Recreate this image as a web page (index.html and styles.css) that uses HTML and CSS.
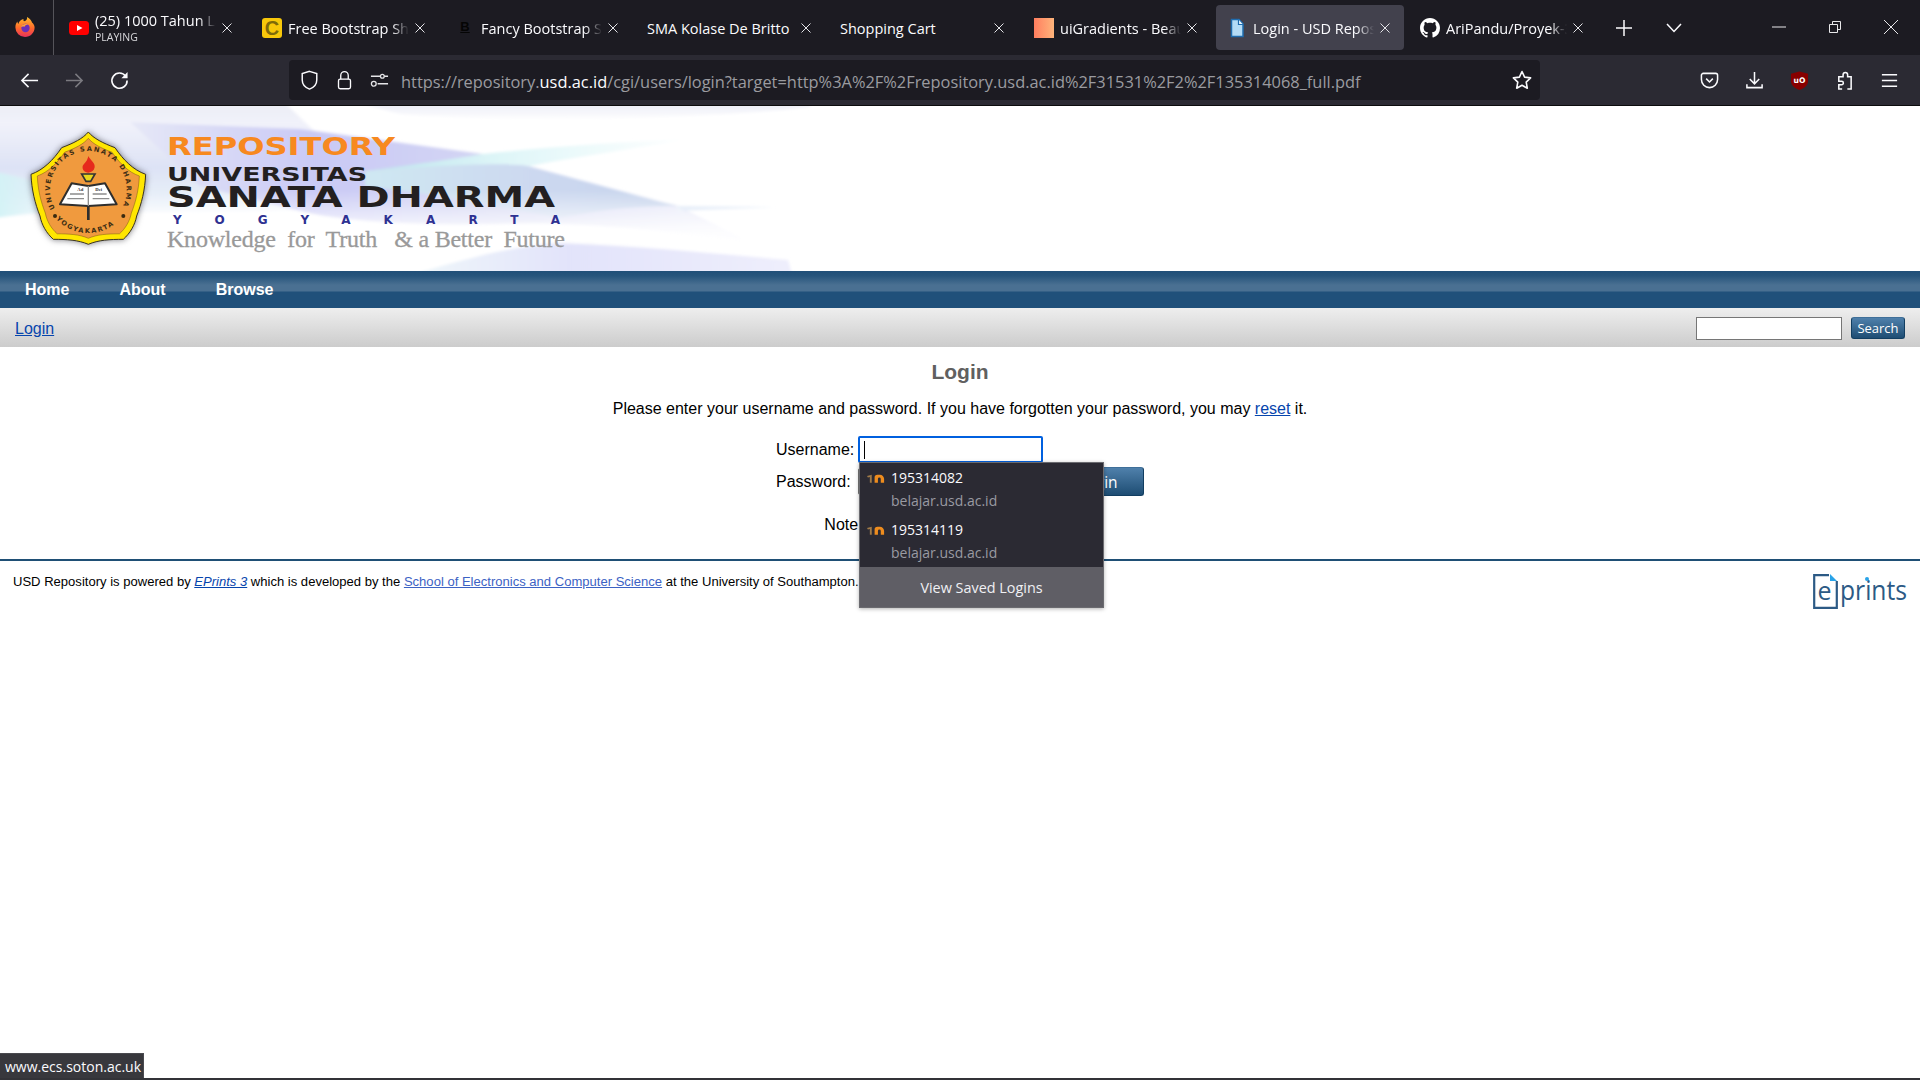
FILE: index.html
```html
<!DOCTYPE html>
<html lang="en">
<head>
<meta charset="utf-8">
<title>Login - USD Repository</title>
<link rel="stylesheet" href="styles.css">
</head>
<body>
<div class="tabstrip">
  <div class="ff-box">
    <svg class="ff" viewBox="0 0 20 20"><defs><linearGradient id="ffg" x1="0" y1="0" x2="0" y2="1"><stop offset="0" stop-color="#ffbd2e"/><stop offset=".55" stop-color="#ff6a2b"/><stop offset="1" stop-color="#e8305c"/></linearGradient></defs><path d="M10 20a9.600 9.600 0 0 1-9.600-9.600c0-2.400.8-4.400 2-5.800 0 1 .3 1.800.9 2.300C4 4 6.500 2.400 8.600 2c-.4 1-.2 1.800.4 2.200C11.500 3.800 12.400 2 12 0c3 1.500 4.700 4 5 5.500 1.500 1 2.600 3 2.600 5 0 5.300-4.300 9.500-9.600 9.500z" fill="url(#ffg)"/><circle cx="10.500" cy="11" r="4.200" fill="#6b2fb8"/><path d="M6 10c1-3 5-4 8-2-3-.5-4 .5-4 1.500-1 0-3 0-4 .5z" fill="#ffa436"/></svg>
  </div>
  <div class="tabs">
    <div class="tab">
      <svg class="fav" viewBox="0 0 20 20"><rect y="3" width="20" height="14" rx="3.500" fill="#f00"/><path d="M8 7l5.500 3L8 13z" fill="#fff"/></svg>
      <div class="title two-line"><span class="title-main">(25) 1000 Tahun Lamanya</span><span class="title-sub">PLAYING</span></div>
      <svg class="close" viewBox="0 0 10 10"><path d="M.5.5l9 9M9.500.5l-9 9"/></svg>
    </div>
    <div class="tab">
      <span class="fav fav-c">C</span>
      <div class="title">Free Bootstrap Shop Cart</div>
      <svg class="close" viewBox="0 0 10 10"><path d="M.5.5l9 9M9.500.5l-9 9"/></svg>
    </div>
    <div class="tab">
      <span class="fav fav-b">B</span>
      <div class="title">Fancy Bootstrap Shop Cart</div>
      <svg class="close" viewBox="0 0 10 10"><path d="M.5.5l9 9M9.500.5l-9 9"/></svg>
    </div>
    <div class="tab">
      <div class="title no-fav">SMA Kolase De Britto</div>
      <svg class="close" viewBox="0 0 10 10"><path d="M.5.5l9 9M9.500.5l-9 9"/></svg>
    </div>
    <div class="tab">
      <div class="title no-fav">Shopping Cart</div>
      <svg class="close" viewBox="0 0 10 10"><path d="M.5.5l9 9M9.500.5l-9 9"/></svg>
    </div>
    <div class="tab">
      <span class="fav fav-ui"></span>
      <div class="title">uiGradients - Beautiful</div>
      <svg class="close" viewBox="0 0 10 10"><path d="M.5.5l9 9M9.500.5l-9 9"/></svg>
    </div>
    <div class="tab tab-active">
      <svg class="fav" viewBox="0 0 20 20"><path d="M4.500 1.500h7.500l4 4.500v12.500h-11.500z" fill="#b4dcf6" stroke="#1f6db0" stroke-width="1.500"/><path d="M11.500 1.500v5h4.500" fill="#e8f5ff" stroke="#1f6db0" stroke-width="1.200"/></svg>
      <div class="title">Login - USD Repository</div>
      <svg class="close" viewBox="0 0 10 10"><path d="M.5.5l9 9M9.500.5l-9 9"/></svg>
    </div>
    <div class="tab">
      <svg class="fav" viewBox="0 0 16 16"><path fill="#fff" d="M8 0C3.580 0 0 3.580 0 8c0 3.540 2.290 6.530 5.470 7.590.4.070.55-.17.55-.38 0-.19-.01-.82-.01-1.490-2.010.37-2.530-.49-2.690-.94-.09-.23-.48-.94-.82-1.130-.28-.15-.68-.52-.01-.53.63-.01 1.080.58 1.230.82.72 1.210 1.870.87 2.330.66.07-.52.28-.87.51-1.070-1.780-.2-3.640-.89-3.640-3.950 0-.87.31-1.590.82-2.150-.08-.2-.36-1.020.08-2.120 0 0 .67-.21 2.200.82.64-.18 1.320-.27 2-.27.68 0 1.360.09 2 .27 1.530-1.040 2.200-.82 2.200-.82.44 1.100.16 1.920.08 2.120.51.56.82 1.270.82 2.150 0 3.070-1.870 3.750-3.650 3.950.29.25.54.73.54 1.480 0 1.070-.01 1.930-.01 2.200 0 .21.15.46.55.38A8.013 8.013 0 0 0 16 8c0-4.420-3.580-8-8-8z"/></svg>
      <div class="title">AriPandu/Proyek-3-Web</div>
      <svg class="close" viewBox="0 0 10 10"><path d="M.5.5l9 9M9.500.5l-9 9"/></svg>
    </div>
    <svg class="strip-icon" viewBox="0 0 16 16"><path d="M8 0v16M0 8h16" stroke="#fbfbfe" stroke-width="1.500"/></svg>
    <svg class="strip-chev" viewBox="0 0 16 10"><path d="M1 1l7 7.500L15 1" fill="none" stroke="#fbfbfe" stroke-width="1.500"/></svg>
  </div>
  <div class="win-controls">
    <svg class="win" viewBox="0 0 14 14"><path d="M0 7h14" stroke="#e8e8ea" stroke-width="1"/></svg>
    <svg class="win" viewBox="0 0 14 14"><path d="M1.500 4.500h8v8h-8zM4.500 4V1.500h8v8H10" fill="none" stroke="#e8e8ea" stroke-width="1"/></svg>
    <svg class="win" viewBox="0 0 14 14"><path d="M0 0l14 14M14 0L0 14" stroke="#e8e8ea" stroke-width="1"/></svg>
  </div>
</div>

<div class="navbar">
  <div class="nav-left">
    <svg class="tool" viewBox="0 0 20 20"><path d="M19 10H2M9 3l-7 7 7 7" fill="none" stroke="#fbfbfe" stroke-width="1.600"/></svg>
    <svg class="tool" viewBox="0 0 20 20"><path d="M1 10h17M11 3l7 7-7 7" fill="none" stroke="#7b7a80" stroke-width="1.600"/></svg>
    <svg class="tool" viewBox="0 0 20 20"><path d="M16.500 5.500A8 8 0 1 0 18 10" fill="none" stroke="#fbfbfe" stroke-width="1.700"/><path d="M18.500 1v6.500H12z" fill="#fbfbfe"/></svg>
  </div>
  <div class="urlbar">
    <svg class="url-ico" viewBox="0 0 20 22"><path d="M10 1.500l8 2.500v7c0 5-4 8.500-8 10-4-1.500-8-5-8-10V4z" fill="none" stroke="#fbfbfe" stroke-width="1.600"/></svg>
    <svg class="url-ico" viewBox="0 0 20 24"><path d="M5.500 11V6.500a4.500 4.500 0 0 1 9 0V11" fill="none" stroke="#fbfbfe" stroke-width="1.600"/><rect x="2.800" y="11" width="14.400" height="11.500" rx="2" fill="none" stroke="#fbfbfe" stroke-width="1.600"/></svg>
    <svg class="url-ico" viewBox="0 0 20 20"><path d="M1 6h10M15 6h4M8 14h11" stroke="#e5e5e8" stroke-width="1.600"/><circle cx="13" cy="6" r="2" fill="none" stroke="#e5e5e8" stroke-width="1.400"/><circle cx="4" cy="14" r="2.500" fill="none" stroke="#e5e5e8" stroke-width="1.400"/></svg>
    <div class="url">https://repository.<b class="url-host">usd.ac.id</b>/cgi/users/login?target=http%3A%2F%2Frepository.usd.ac.id%2F31531%2F2%2F135314068_full.pdf</div>
    <svg class="star" viewBox="0 0 20 20"><path d="M10 1.500l2.600 5.600 6 .8-4.400 4.200 1.100 6.100-5.300-3-5.300 3 1.100-6.100L1.400 7.900l6-.8z" fill="none" stroke="#fbfbfe" stroke-width="1.600" stroke-linejoin="round"/></svg>
  </div>
  <div class="nav-right">
    <svg class="tool-r" viewBox="0 0 20 20"><path d="M3.500 2.500h13a2 2 0 0 1 2 2V9a8.500 8.500 0 0 1-17 0V4.500a2 2 0 0 1 2-2z" fill="none" stroke="#fbfbfe" stroke-width="1.600"/><path d="M6.500 8l3.500 3.500L13.500 8" fill="none" stroke="#fbfbfe" stroke-width="1.600"/></svg>
    <svg class="tool-r" viewBox="0 0 20 20"><path d="M10 1v12M5 8.500l5 5 5-5M2 14v3.500h16V14" fill="none" stroke="#fbfbfe" stroke-width="1.600"/></svg>
    <svg class="tool-r" viewBox="1 0 18 20"><path d="M10 .5l9 2.500v7.500c0 4.800-4 7.500-9 9.500-5-2-9-4.700-9-9.500V3z" fill="#800"/><text x="10" y="12.500" class="ub-text">uO</text></svg>
    <svg class="tool-r" viewBox="0 0 20 20"><path d="M7.500 19H4v-4.500h3a1.800 1.800 0 0 0 0-3.600H4V6h4.500V4a2.400 2.400 0 0 1 4.800 0v2H17v13h-4" fill="none" stroke="#fbfbfe" stroke-width="1.600"/></svg>
    <svg class="tool-r" viewBox="0 0 20 20"><path d="M2 4h16M2 10h16M2 16h16" stroke="#fbfbfe" stroke-width="1.600"/></svg>
  </div>
</div>

<header class="banner">
  <svg class="banner-art" viewBox="0 0 820 165" width="820" height="165">
    <defs>
      <linearGradient id="lav" gradientUnits="userSpaceOnUse" x1="130" y1="0" x2="745" y2="0"><stop offset="0" stop-color="#e6e8f7"/><stop offset=".3" stop-color="#c9c9f5"/><stop offset=".6" stop-color="#d4d6f3"/><stop offset="1" stop-color="#eeeffb"/></linearGradient>
      <linearGradient id="fade" gradientUnits="userSpaceOnUse" x1="0" y1="84" x2="0" y2="126"><stop offset="0" stop-color="#fff" stop-opacity="0"/><stop offset="1" stop-color="#fff" stop-opacity=".9"/></linearGradient>
      <linearGradient id="blu" gradientUnits="userSpaceOnUse" x1="360" y1="0" x2="680" y2="0"><stop offset="0" stop-color="#cfe8f2"/><stop offset=".55" stop-color="#ccd8f0"/><stop offset="1" stop-color="#c6d4ec"/></linearGradient>
      <linearGradient id="cy" gradientUnits="userSpaceOnUse" x1="380" y1="0" x2="690" y2="0"><stop offset="0" stop-color="#bfe6ee"/><stop offset=".4" stop-color="#dff6f8"/><stop offset="1" stop-color="#ffffff"/></linearGradient>
      <linearGradient id="tl" gradientUnits="userSpaceOnUse" x1="0" y1="0" x2="0" y2="112"><stop offset="0" stop-color="#eceef6"/><stop offset=".15" stop-color="#f1f2fa"/><stop offset=".55" stop-color="#dde2f5"/><stop offset=".78" stop-color="#e6eef8"/><stop offset="1" stop-color="#ffffff"/></linearGradient>
      <linearGradient id="cyl" x1="0" y1="0" x2="1" y2="0"><stop offset="0" stop-color="#d2f3f6"/><stop offset="1" stop-color="#e8eef9" stop-opacity="0"/></linearGradient>
      <linearGradient id="top" gradientUnits="userSpaceOnUse" x1="0" y1="0" x2="0" y2="15"><stop offset="0" stop-color="#eff0f8"/><stop offset="1" stop-color="#ffffff"/></linearGradient>
      <linearGradient id="bot" gradientUnits="userSpaceOnUse" x1="420" y1="0" x2="790" y2="0"><stop offset="0" stop-color="#eef6fa"/><stop offset=".4" stop-color="#e2e3fa"/><stop offset="1" stop-color="#eeeefc"/></linearGradient>
      <filter id="soft" x="-5%" y="-5%" width="110%" height="110%"><feGaussianBlur stdDeviation="1.500"/></filter>
      <path id="arcTop" d="M105 265A115 115 0 1 1 305 265"/>
      <path id="arcBot" d="M108 297A132 132 0 0 0 302 297"/>
    </defs>
    <g filter="url(#soft)">
      <path d="M-5 -5H283L313 24L380 60 360 100C250 112 100 100 -5 114Z" fill="url(#tl)"/>
      <path d="M-5 66C30 72 60 84 95 100 60 104 25 108 -5 112Z" fill="url(#cyl)"/>
      <path d="M130 16L300 23 483 48 677 100 743 133C640 122 560 115 500 118 420 120 340 115 300 105L200 80Z" fill="url(#lav)"/>
      <path d="M365 65C420 60 460 52 483 48 520 58 620 85 677 100 630 100 600 104 560 112L440 90 365 80Z" fill="url(#blu)"/>
      <path d="M365 65C420 58 460 52 483 48 560 40 620 36 690 33 640 42 580 50 530 60 500 56 430 60 365 65Z" fill="url(#cy)"/>
      <path d="M677 100L775 101 677 105Z" fill="#e8eff9"/>
      <path d="M180 84H640L760 140H180Z" fill="url(#fade)"/>
      <path d="M415 168C480 148 520 140 560 137 640 140 720 148 788 154L792 168Z" fill="url(#bot)"/>
      <path d="M360 -3H810V1C700 14 500 16 400 8Z" fill="url(#top)"/>
    </g>
    <g transform="translate(20 14) scale(.3333)">
      <path class="seal-out" d="M205 36C220 55 250 70 285 83 310 120 340 150 377 163 375 210 365 250 350 288 345 315 330 340 310 358 270 358 235 360 205 373 175 360 140 358 100 358 80 340 65 315 60 288 45 250 35 210 33 163 70 150 100 120 125 83 160 70 190 55 205 36Z"/>
      <path class="seal-in" transform="translate(205 208) scale(.89) translate(-205 -208)" d="M205 36C220 55 250 70 285 83 310 120 340 150 377 163 375 210 365 250 350 288 345 315 330 340 310 358 270 358 235 360 205 373 175 360 140 358 100 358 80 340 65 315 60 288 45 250 35 210 33 163 70 150 100 120 125 83 160 70 190 55 205 36Z"/>
      <text class="seal-text" textLength="470"><textPath href="#arcTop">UNIVERSITAS SANATA DHARMA</textPath></text>
      <text class="seal-text" textLength="190"><textPath href="#arcBot">YOGYAKARTA</textPath></text>
      <circle class="seal-dot" cx="105" cy="288" r="6"/>
      <circle class="seal-dot" cx="310" cy="288" r="6"/>
      <path class="flame" d="M205 108C212 122 226 128 224 142 222 152 216 157 205 158 194 157 186 150 188 138 194 128 202 124 205 108Z"/>
      <path class="torch" d="M185 162h40l-13 22h-14z"/>
      <path class="book" d="M120 253L155 190 205 198 255 190 290 253 205 258Z"/>
      <path class="book-line" d="M205 198V258M150 222h42M142 236h50M218 222h42M218 236h50"/>
      <text class="book-text" x="172" y="214">Ad</text>
      <text class="book-text" x="226" y="214">Dei</text>
      <path class="book-line-dark" d="M205 258V300"/>
    </g>
    <text x="167" y="49" class="b-repo" textLength="228" lengthAdjust="spacingAndGlyphs">REPOSITORY</text>
    <text x="167" y="75" class="b-univ" textLength="200" lengthAdjust="spacingAndGlyphs">UNIVERSITAS</text>
    <text x="167" y="101" class="b-sanata" textLength="388" lengthAdjust="spacingAndGlyphs">SANATA DHARMA</text>
    <text x="173" y="118" class="b-yogya" textLength="387">YOGYAKARTA</text>
    <text x="167" y="141" class="b-know" textLength="398">Knowledge  for  Truth   &amp; a Better  Future</text>
  </svg>
</header>

<nav class="menu">
  <a class="menu-link">Home</a>
  <a class="menu-link">About</a>
  <a class="menu-link">Browse</a>
</nav>

<div class="subbar">
  <a class="link login-link">Login</a>
  <form class="search">
    <input class="search-input" type="text">
    <button class="search-btn" type="button">Search</button>
  </form>
</div>

<main class="content">
  <h1 class="page-title">Login</h1>
  <p class="intro">Please enter your username and password. If you have forgotten your password, you may <a class="link">reset</a> it.</p>
  <div class="login-form">
    <label class="form-label">Username:</label>
    <div class="fake-input focused"><span class="caret"></span></div>
    <span></span>
    <label class="form-label">Password:</label>
    <div class="fake-input"></div>
    <button class="login-btn" type="button">Login</button>
    <div class="autocomplete">
      <div class="ac-row">
        <svg class="ac-ico" viewBox="0 0 20 11"><path d="M0 4l5-1.500V11H3V5L1 5.500z" fill="#a07a48"/><path d="M8 11V5.500a3 3 0 0 1 3-3h2.500a4.500 4.500 0 0 1 4.500 4.500v4h-3.500V7a1.500 1.500 0 0 0-3 0v4z" fill="#ee8c1e"/></svg>
        <div class="ac-text"><div class="ac-name">195314082</div><div class="ac-domain">belajar.usd.ac.id</div></div>
      </div>
      <div class="ac-row">
        <svg class="ac-ico" viewBox="0 0 20 11"><path d="M0 4l5-1.500V11H3V5L1 5.500z" fill="#a07a48"/><path d="M8 11V5.500a3 3 0 0 1 3-3h2.500a4.500 4.500 0 0 1 4.500 4.500v4h-3.500V7a1.500 1.500 0 0 0-3 0v4z" fill="#ee8c1e"/></svg>
        <div class="ac-text"><div class="ac-name">195314119</div><div class="ac-domain">belajar.usd.ac.id</div></div>
      </div>
      <div class="ac-footer">View Saved Logins</div>
    </div>
  </div>
  <p class="note">Note: you must have cookies enabled.</p>
</main>

<footer class="page-footer">
  <div class="powered">USD Repository is powered by <a class="link"><em>EPrints 3</em></a> which is developed by the <a class="link link-hover">School of Electronics and Computer Science</a> at the University of Southampton.</div>
  <svg class="eprints-logo" viewBox="0 0 94 35" width="94" height="35">
    <path d="M16 1.200H1.200v32.600h22.600V7" fill="none" stroke="#2c5a85" stroke-width="2.200"/>
    <path d="M17 0l7 7h-7z" fill="#29a3e8"/>
    <text x="4.500" y="26" class="ep-e">e</text>
    <text x="27" y="26" class="ep-prints" textLength="67" lengthAdjust="spacingAndGlyphs">prints</text>
    <circle cx="54" cy="5" r="2" fill="#29a3e8"/>
  </svg>
</footer>

<div class="status">www.ecs.soton.ac.uk</div>
<div class="bottom-line"></div>
</body>
</html>
```
FILE: styles.css
```css
* { box-sizing: border-box; }
html, body { margin: 0; height: 1080px; overflow: hidden; }
body {
  position: relative;
  background: #fff;
  color: #000;
  font-family: "Liberation Sans", Arial, sans-serif;
  font-size: 16px;
}

/* tab strip */
.tabstrip {
  height: 55px;
  background: #1c1b22;
  display: flex;
  color: #fbfbfe;
  font-family: "Open Sans", sans-serif;
}
.ff-box {
  width: 54px;
  height: 55px;
  border-right: 1px solid #55545a;
  display: flex;
  padding: 17px 0 0 15px;
}
.ff { width: 20px; height: 20px; }
.tabs {
  display: flex;
  gap: 5px;
  padding: 5px 0 5px 4px;
  align-items: stretch;
}
.tab {
  width: 188px;
  height: 45px;
  border-radius: 4px;
  display: flex;
  align-items: center;
  padding: 3px 14px 0 11px;
  position: relative;
}
.tab-active { background: #42414d; }
.fav { width: 20px; height: 20px; flex: none; margin-right: 6px; margin-top: -3px; }
.fav-c {
  background: #f8c80a;
  border-radius: 3px;
  color: #7f6a08;
  font: 700 20px/20px "Liberation Sans", sans-serif;
  text-align: center;
}
.fav-b {
  color: #050505;
  font: 700 13px/18px "Liberation Sans", sans-serif;
  text-align: center;
  text-decoration: underline;
}
.fav-ui { background: linear-gradient(90deg, #ff7e5f, #feb47b); }
.title {
  width: 121px;
  flex: none;
  white-space: nowrap;
  overflow: hidden;
  font-size: 14.500px;
  line-height: 20px;
  -webkit-mask-image: linear-gradient(90deg, #000 86%, transparent 100%);
  mask-image: linear-gradient(90deg, #000 86%, transparent 100%);
}
.no-fav { width: 147px; -webkit-mask-image: none; mask-image: none; margin-left: -1px; }
.two-line { display: flex; flex-direction: column; margin-top: -3px; }
.title-main { line-height: 18px; }
.title-sub { font-size: 10.500px; line-height: 14px; color: #d8d8dc; }
.close {
  margin-left: auto;
  width: 10px;
  height: 10px;
  margin-top: -3px;
  fill: none;
  stroke: #e4e4e8;
  stroke-width: 1;
  flex: none;
}
.strip-icon { width: 16px; height: 16px; margin: 15px 0 0 14px; flex: none; }
.strip-chev { width: 16px; height: 10px; margin: 18px 0 0 29px; flex: none; }
.win-controls {
  margin-left: auto;
  display: flex;
  gap: 42px;
  padding: 20px 22px 0 0;
}
.win { width: 14px; height: 14px; }

/* toolbar */
.navbar {
  height: 51px;
  background: #2b2a33;
  border-bottom: 1px solid #0c0c0d;
  display: flex;
  align-items: flex-start;
}
.nav-left {
  width: 289px;
  display: flex;
  gap: 26px;
  padding: 16px 0 0 20px;
}
.tool { width: 19px; height: 19px; }
.urlbar {
  width: 1251px;
  height: 40px;
  margin-top: 5px;
  border-radius: 4px;
  background: #1c1b22;
  display: flex;
  align-items: center;
  padding-left: 11px;
}
.url-ico { width: 19px; height: 20px; flex: none; margin-right: 16px; }
.url {
  font-family: "Open Sans", sans-serif;
  font-size: 16.400px;
  color: #9b9ba0;
  white-space: nowrap;
  margin: 2px 0 0 -4px;
}
.url-host { font-weight: 400; color: #fbfbfe; }
.star { width: 20px; height: 20px; margin-left: auto; margin-right: 8px; }
.nav-right {
  display: flex;
  gap: 26px;
  padding: 16px 0 0 160px;
}
.tool-r { width: 19px; height: 19px; }
.ub-text { font: 700 8px "DejaVu Sans", sans-serif; fill: #fff; text-anchor: middle; }

/* banner */
.banner { height: 165px; background: #fff; overflow: hidden; }
.banner-art { display: block; }
.b-repo { font: 700 25px "DejaVu Sans", sans-serif; fill: #f7891f; }
.b-univ { font: 700 19px "DejaVu Sans", sans-serif; fill: #231f20; }
.b-sanata { font: 700 29px "DejaVu Sans", sans-serif; fill: #231f20; }
.b-yogya { font: 700 12px "DejaVu Sans", sans-serif; fill: #2e3192; }
.b-know { font: 24px "Liberation Serif", serif; fill: #999999; stroke: #999999; stroke-width: .3px; white-space: pre; }
.seal-out { fill: #ffe600; stroke: #3a3320; stroke-width: 3; filter: drop-shadow(0 0 10px rgba(50,50,60,.65)); }
.seal-in { fill: #f09a3e; stroke: #6b4a10; stroke-width: 1.500; }
.seal-text { font: 700 20px "DejaVu Sans", sans-serif; fill: #3d2d14; }
.seal-dot { fill: #3a2a10; }
.flame { fill: #e62a1c; }
.torch { fill: #e7d51c; stroke: #333; stroke-width: 5; }
.book { fill: #fff; stroke: #2e2e2e; stroke-width: 6; stroke-linejoin: round; }
.book-line { stroke: #8c8c8c; stroke-width: 4; fill: none; }
.book-line-dark { stroke: #2e2e2e; stroke-width: 8; }
.book-text { font: 700 14px "Liberation Serif", serif; fill: #333; }

/* menu */
.menu {
  height: 37px;
  background: linear-gradient(#204f78 0, #27557c 5px, #4a7092 14px, #4a7092 20px, #20507a 21px, #20507a 100%);
  display: flex;
  gap: 50px;
  padding-left: 25px;
  align-items: center;
}
.menu-link { color: #fff; font-weight: 700; font-size: 16px; }

.subbar {
  height: 39px;
  background: linear-gradient(#eeeeee, #cccccc);
  display: flex;
  align-items: center;
  justify-content: space-between;
  padding: 0 15px;
}
.link { color: #0645ad; text-decoration: underline; }
.link-hover { color: #3c62c4; }
.login-link { margin-top: 2px; }
.search { display: flex; gap: 9px; align-items: flex-start; margin-top: 2px; }
.search-input {
  width: 146px;
  height: 23px;
  background: #fff;
  border: 1px solid #767676;
  margin: 0;
  padding: 0;
}
.search-btn, .login-btn {
  border: 1px solid #123e61;
  border-top-color: #3f6f99;
  border-radius: 3px;
  color: #fff;
  background: linear-gradient(#4f80ab, #1e4d73);
  padding: 0;
  font-family: "Open Sans", sans-serif;
}
.search-btn { width: 54px; height: 22px; font-size: 13px; }

/* content */
.content { display: flex; flex-direction: column; align-items: center; height: 214px; border-bottom: 2px solid #1f4f75; }
.page-title { margin: 12px 0 0; font-size: 21px; line-height: 26px; font-weight: 700; color: #606060; }
.intro { margin: 14px 0 0; line-height: 20px; }
.login-form {
  position: relative;
  margin-top: 17px;
  display: grid;
  grid-template-columns: 82px 185px 101px;
  grid-auto-rows: 27px;
  row-gap: 5px;
  width: 368px;
  align-items: center;
}
.form-label { line-height: 27px; }
.fake-input { height: 27px; border: 1px solid #767676; border-radius: 2px; background: #fff; display: flex; align-items: center; padding-left: 4px; }
.focused { border: 2px solid #0060df; }
.caret { width: 1px; height: 18px; background: #000; }
.login-btn { margin: -1px 0 -1px 9px; width: 92px; height: 29px; font-size: 15.500px; padding-top: 1px; }
.autocomplete {
  position: absolute;
  left: 83px;
  top: 26px;
  width: 245px;
  height: 146px;
  background: #2b2a33;
  border: 1px solid #6b6b70;
  box-shadow: 0 1px 4px rgba(0,0,0,.3);
  color: #fbfbfe;
  font-family: "Open Sans", sans-serif;
  display: flex;
  flex-direction: column;
}
.ac-row { height: 52px; flex: none; display: flex; padding: 5px 0 0 7px; }
.ac-ico { width: 19px; height: 11px; margin: 4px 5px 0 0; flex: none; }
.ac-name { font-size: 14px; line-height: 20px; }
.ac-domain { font-size: 14px; line-height: 20px; margin-top: 3px; color: #9a9aa2; }
.ac-footer { flex: 1; background: #5f5e65; text-align: center; font-size: 14.400px; line-height: 38px; padding-top: 2px; color: #f0f0f4; }
.note { margin: 20px 0 0; line-height: 20px; }

/* footer */
.page-footer {
  display: flex;
  justify-content: space-between;
  padding: 13px 13px 0 13px;
}
.powered { font-size: 13.050px; line-height: 15px; }
.eprints-logo { display: block; }
.ep-e { font: 25px "Open Sans", sans-serif; fill: #2c5a85; }
.ep-prints { font: 28px "Open Sans", sans-serif; fill: #2c5a85; }

/* overlays */
.status {
  position: absolute;
  left: 0;
  bottom: 2px;
  width: 144px;
  height: 25px;
  background: #38383d;
  border: 1px solid #4a4a4f;
  border-left: 0;
  border-bottom: 0;
  color: #fbfbfe;
  font: 14px/26px "Open Sans", sans-serif;
  padding-left: 5px;
  white-space: nowrap;
}
.bottom-line { position: absolute; left: 0; right: 0; bottom: 0; height: 2px; background: #333338; }
```
